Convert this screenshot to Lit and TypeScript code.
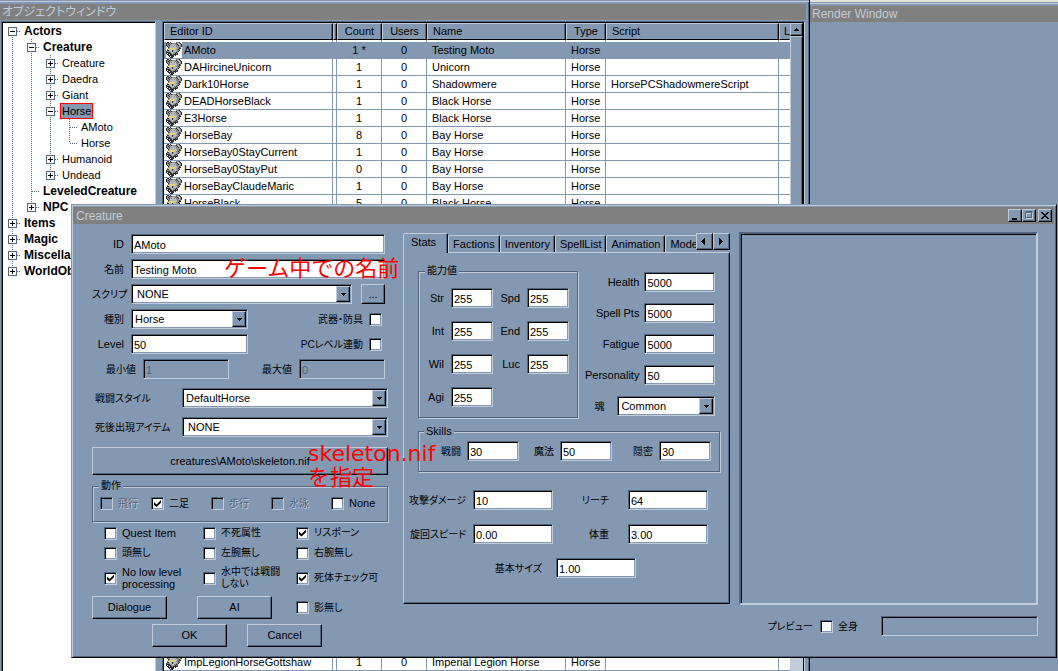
import { LitElement, html, svg, css, nothing } from "lit";
import { customElement, property } from "lit/decorators.js";
import { classMap } from "lit/directives/class-map.js";

type TreeRow = { guides: string; label: string; bold?: boolean; selected?: boolean };
type ListRow = { id: string; count: string; name: string; script?: string };

/* Guide codes: v line, t tee, l corner, + closed node, - open node,
   P last closed node of a branch, F first open node of the tree. */
const TREE: TreeRow[] = [
  { guides: "F", label: "Actors", bold: true },
  { guides: "v-", label: "Creature", bold: true },
  { guides: "vv+", label: "Creature" },
  { guides: "vv+", label: "Daedra" },
  { guides: "vv+", label: "Giant" },
  { guides: "vv-", label: "Horse", selected: true },
  { guides: "vvvt", label: "AMoto" },
  { guides: "vvvl", label: "Horse" },
  { guides: "vv+", label: "Humanoid" },
  { guides: "vvP", label: "Undead" },
  { guides: "vt", label: "LeveledCreature", bold: true },
  { guides: "vP", label: "NPC", bold: true },
  { guides: "+", label: "Items", bold: true },
  { guides: "+", label: "Magic", bold: true },
  { guides: "+", label: "Miscellaneous", bold: true },
  { guides: "P", label: "WorldObjects", bold: true },
];

const ROWS: ListRow[] = [
  { id: "AMoto", count: "1 *", name: "Testing Moto" },
  { id: "DAHircineUnicorn", count: "1", name: "Unicorn" },
  { id: "Dark10Horse", count: "1", name: "Shadowmere", script: "HorsePCShadowmereScript" },
  { id: "DEADHorseBlack", count: "1", name: "Black Horse" },
  { id: "E3Horse", count: "1", name: "Black Horse" },
  { id: "HorseBay", count: "8", name: "Bay Horse" },
  { id: "HorseBay0StayCurrent", count: "1", name: "Bay Horse" },
  { id: "HorseBay0StayPut", count: "0", name: "Bay Horse" },
  { id: "HorseBayClaudeMaric", count: "1", name: "Bay Horse" },
  { id: "HorseBlack", count: "5", name: "Black Horse" },
];
const LAST_ROW: ListRow = { id: "ImpLegionHorseGottshaw", count: "1", name: "Imperial Legion Horse" };

/* 16x16 creature head, one character per pixel. */
const CREATURE = [
  ".kk.k.....gggk..",
  "kggkgkggggkllgk.",
  "kgkggllllggkllgk",
  "kggklgllglggklgk",
  ".kggllllllggglgk",
  "..kglllllllggkg.",
  "..glyylyyllggkk.",
  ".gyylyyyllggkg..",
  ".kklllkglllggk..",
  "kgggllklllggk...",
  "kkkkglllggkg....",
  "kwkkkglggkgk....",
  ".kkwkkgkkkkr....",
  "..kkkkkkwk......",
  "...kwkkk........",
  "....kkk.........",
];
const PIXEL: Record<string, string> = { k: "#2c2e30", g: "#88898b", l: "#b9babc", y: "#f2e24a", w: "#e8e8e8", r: "#7a4a4a" };

@customElement("creature-icon")
export class CreatureIcon extends LitElement {
  static styles = css`
    :host { display: block; flex: none; width: 16px; height: 16px; background: #fff; }
    svg { display: block; }
  `;
  render() {
    return html`<svg width="16" height="16" viewBox="0 0 16 16" shape-rendering="crispEdges" aria-hidden="true">
      ${CREATURE.map((line, y) =>
        [...line].map((c, x) => (PIXEL[c] ? svg`<rect x=${x} y=${y} width="1" height="1" fill=${PIXEL[c]}></rect>` : nothing)),
      )}
    </svg>`;
  }
}

@customElement("tree-guide")
export class TreeGuide extends LitElement {
  static styles = css`
    :host { display: block; width: 19px; height: 16px; }
    svg { display: block; }
  `;
  @property() kind = " ";
  render() {
    const k = this.kind;
    const top = "vt-+lP".includes(k);
    const bottom = "vt-+F".includes(k);
    const box = "+-PF".includes(k);
    const dots = (d: string) => svg`<path d=${d} stroke="#51657d" stroke-dasharray="1 1" fill="none"></path>`;
    return html`<svg width="19" height="16" viewBox="0 0 19 16" shape-rendering="crispEdges" aria-hidden="true">
      ${top ? dots("M9.5 0V8") : nothing}
      ${bottom ? dots("M9.5 8V16") : nothing}
      ${k === "v" ? nothing : dots("M10 8.5H18")}
      ${box
        ? svg`<rect x="5.5" y="4.5" width="8" height="8" fill="#fff" stroke="#51657d"></rect>
            <path d="M7 8.5H12" stroke="#000"></path>
            ${"+P".includes(k) ? svg`<path d="M9.5 6V11" stroke="#000"></path>` : nothing}`
        : nothing}
    </svg>`;
  }
}

@customElement("app-root")
export class AppRoot extends LitElement {
  static styles = css`
    :host {
      --face: #8399b1;
      --light: #c0ccd9;
      --dark: #51657d;
      display: block;
      position: relative;
      height: 100vh;
      overflow: hidden;
      background: #e4e2dc;
      color: #000;
      font: 11px/13px "Liberation Sans", "Noto Sans CJK JP", sans-serif;
      font-feature-settings: "palt";
    }
    * { box-sizing: border-box; }
    button, input, select { font: inherit; color: inherit; margin: 0; border-radius: 0; }
    .jp { font-size: 10px; }

    /* windows */
    .window { position: absolute; display: flex; flex-direction: column; background: var(--face); }
    .objects { left: 0; top: 0; bottom: 0; width: 810px; padding: 4px 3px 0 0; border-right: 1px solid #000; box-shadow: inset 0 1px 0 var(--face), inset 0 2px 0 var(--light), inset -1px 0 0 var(--dark); }
    .render { left: 810px; right: 0; top: 2px; bottom: 0; padding-top: 4px; box-shadow: inset 0 1px 0 var(--face), inset 0 2px 0 var(--light); }
    .dialog {
      left: 71px; right: 1px; top: 204px; padding: 1px;
      border: 1px solid; border-color: var(--face) #000 #000 var(--face);
      box-shadow: inset 1px 1px 0 var(--light), inset -1px -1px 0 var(--dark);
    }
    .title { display: flex; align-items: center; height: 16px; padding: 0 2px; background: #808080; color: var(--light); font-size: 12px; line-height: 16px; font-weight: 400; margin: 0; }
    .dialog .title { height: 17px; margin: 1px 1px 0 0; padding-left: 3px; }
    .title-text { flex: 1; }
    .caption { width: 14px; height: 13px; }
    .close { margin-left: 2px; }

    /* relief */
    .raised, .btn { background: var(--face); border: 1px solid; border-color: var(--light) #000 #000 var(--light); box-shadow: inset -1px -1px 0 var(--dark); padding: 0; display: flex; align-items: center; justify-content: center; }
    .sunken, .field, .check { border: 1px solid; border-color: var(--dark) var(--light) var(--light) var(--dark); box-shadow: inset 1px 1px 0 #000, inset -1px -1px 0 var(--face); }

    /* object window */
    .panes { flex: 1; min-height: 0; display: flex; gap: 6px; padding: 1px 1px 0 1px; }
    .pane { border: 1px solid; border-color: var(--dark) var(--light) var(--light) var(--dark); border-bottom: 0; }
    .tree { width: 155px; margin: 0; padding: 1px 0 0 1px; background: #fff; box-shadow: inset 1px 1px 0 #000; list-style: none; overflow: hidden; }
    .node { display: flex; height: 16px; line-height: 16px; white-space: nowrap; }
    .node-label { padding: 0 2px; }
    .bold { font-weight: 700; font-size: 12px; }
    .node .selected { background: var(--face); outline: 1px solid #f00; outline-offset: -1px; }
    .list { flex: 1; min-width: 0; display: flex; background: #fff; padding: 1px 1px 0 1px; box-shadow: inset 1px 1px 0 #000, inset -1px 0 0 #000; overflow: hidden; }
    .grid { flex: 1; min-width: 0; overflow: hidden; }
    table { width: 100%; table-layout: fixed; border-collapse: separate; border-spacing: 0; }
    .c-id { width: 169px; } .c-gap { width: 4px; } .c-num { width: 45px; } .c-name { width: 139px; } .c-type { width: 40px; } .c-script { width: 173px; }
    th { height: 17px; padding: 0 5px; font-weight: 400; text-align: left; background: var(--face); border: 1px solid; border-color: var(--light) #000 #000 var(--light); box-shadow: inset -1px 0 0 var(--dark); white-space: nowrap; line-height: 15px; }
    th.num { text-align: center; padding: 0; }
    th.last { padding: 0 0 0 4px; border-right-color: var(--face); box-shadow: none; }
    .space td { height: 2px; border-bottom: 0; }
    td { height: 17px; padding: 1px 5px 0 5px; border: 1px solid var(--face); border-width: 0 1px 1px 0; line-height: 15px; white-space: nowrap; }
    .space td { padding: 0; line-height: 1px; }
    td:last-child { border-right: 0; }
    td.id { padding: 1px 0 0 2px; }
    td.num { text-align: center; padding: 1px 0 0; }
    tr.current td { background: var(--face); }
    .with-icon { display: flex; align-items: flex-end; height: 15px; gap: 2px; }
    .offscreen td { height: 442px; }
    .scroll { width: 13px; display: flex; flex-direction: column; background: var(--light); }
    .scroll .raised { width: 13px; height: 13px; }
    .thumb { flex: none; height: 520px; background: var(--face); border: 1px solid; border-color: var(--light) #000 #000 var(--light); box-shadow: inset -1px -1px 0 var(--dark); }

    /* dialog */
    .body { display: flex; align-items: stretch; padding: 0 17px 9px 19px; }
    .left { width: 296px; margin-top: 10px; display: flex; flex-direction: column; }
    .middle { width: 327px; margin: 9px 0 0 15px; }
    .right { flex: 1; min-width: 0; margin: 8px 0 11px 9px; display: flex; flex-direction: column; }

    .field { height: 20px; min-width: 0; width: 100%; padding: 1px 3px 0 2px; background: #fff; outline: 0; display: block; }
    .field:disabled { background: var(--face); color: var(--dark); opacity: 1; }
    .combo { display: grid; grid-template-columns: 1fr 16px; min-width: 0; text-align: left; }
    .combo select { grid-area: 1 / 1 / 2 / 3; appearance: none; padding: 0 18px 0 3px; }
    .combo .raised { grid-area: 1 / 2; width: 14px; height: 16px; margin: 2px 0; pointer-events: none; z-index: 1; }
    .indent select { padding-left: 5px; }
    .btn { height: 23px; width: 75px; }
    .btn.more { width: 24px; height: 20px; }
    .btn.wide { width: 100%; height: 28px; margin-top: 10px; }

    .rows { display: grid; gap: 5px; padding-right: 3px; }
    .row { display: grid; grid-template-columns: 32px 1fr; column-gap: 7px; align-items: center; white-space: nowrap; }
    .row > label:first-child { text-align: right; }
    .row.more-row { grid-template-columns: 32px 221px 1fr; }
    .row.more-row .more { justify-self: end; }
    .row.check-row { grid-template-columns: 32px 117px 1fr; }
    .row.range { grid-template-columns: 44px 86px 56px 1fr; }
    .row.range label { text-align: right; }
    .tail { display: flex; align-items: center; justify-content: flex-end; gap: 6px; padding-right: 3px; }
    .wide-rows { display: grid; gap: 9px; margin-top: 9px; }
    .wide-row { display: grid; grid-template-columns: 87px 1fr; padding-left: 3px; align-items: center; white-space: nowrap; }

    .check { appearance: none; flex: none; width: 13px; height: 13px; background: #fff; display: grid; place-items: center; }
    .check:checked::before { content: ""; width: 7px; height: 7px; background: #000; clip-path: polygon(0 29%, 36% 64%, 100% 0, 100% 40%, 36% 100%, 0 70%); }
    .check:disabled { background: var(--face); }
    .tick { display: flex; align-items: center; gap: 5px; white-space: nowrap; }
    .tick.off { color: var(--dark); text-shadow: 1px 1px 0 var(--light); }

    fieldset { min-width: 0; margin: 0; border: 1px solid var(--dark); box-shadow: 1px 1px 0 var(--light), inset 1px 1px 0 var(--light); }
    legend { padding: 0 2px; margin-left: 5px; height: 12px; line-height: 12px; background: var(--face); }
    .motion { display: grid; grid-template-columns: 51px 60px 60px 60px 1fr; padding: 5px 0 11px 7px; margin-top: 5px; }
    .motion legend { margin-left: -1px; }
    .flags { display: grid; grid-template-columns: 99px 93px 1fr; grid-template-rows: 14px 14px 24px; row-gap: 6px; padding-left: 12px; margin-top: 4px; line-height: 12px; }
    .actions { display: flex; align-items: center; margin-top: 6px; }
    .actions .btn + .btn { margin-left: 30px; }
    .actions .tick { margin-left: 24px; }
    .confirm { display: flex; gap: 20px; padding-left: 60px; margin-top: 5px; }

    /* tabs */
    .strip { display: flex; height: 20px; margin-bottom: -1px; position: relative; }
    .tabs { flex: 1; min-width: 0; display: flex; align-items: flex-start; overflow: hidden; }
    .tab { flex: none; margin-top: 2px; height: 17px; padding: 0 4px; background: var(--face); border: 1px solid; border-color: var(--light) #000 transparent var(--light); border-bottom: 0; border-radius: 2px 2px 0 0; box-shadow: inset -1px 0 0 var(--dark); white-space: nowrap; }
    .tab.active { margin-top: 0; height: 20px; padding: 0 11px 2px 7px; }
    .strip .raised { width: 17px; height: 17px; }
    .panel { border: 1px solid; border-color: var(--light) #000 #000 var(--light); box-shadow: inset -1px -1px 0 var(--dark); padding: 12px 9px 25px 12px; }
    .top { display: flex; justify-content: space-between; padding: 0 5px 0 2px; }
    .abilities { width: 160px; display: grid; grid-template-columns: 24px 42px 20px 42px; column-gap: 7px; row-gap: 13px; align-items: center; padding: 11px 0 10px 1px; }
    .abilities label { text-align: right; }
    .vitals { margin-top: 7px; width: 130px; display: grid; row-gap: 11px; align-content: start; }
    .vital { display: grid; grid-template-columns: 1fr 71px; column-gap: 5px; align-items: center; white-space: nowrap; text-align: right; }
    .vital.soul { grid-template-columns: 1fr 98px; column-gap: 13px; }
    .skills { margin: 7px 0 0 2px; display: grid; grid-template-columns: 100px 93px 99px; padding: 4px 0 10px 0; }
    .abilities legend, .skills legend { margin-left: 5px; }
    .skill { display: grid; grid-template-columns: 1fr 52px; column-gap: 6px; align-items: center; text-align: right; }
    .misc { display: grid; grid-template-columns: 50px 80px 61px 80px; column-gap: 7px; row-gap: 14px; margin-top: 18px; align-items: center; white-space: nowrap; }
    .misc label { display: flex; justify-content: flex-end; }
    .misc .far { padding-right: 12px; }
    .size { display: grid; grid-template-columns: 126px 80px; column-gap: 14px; margin-top: 14px; align-items: center; }
    .size label { text-align: right; }

    /* preview */
    .preview { flex: 1; border-width: 2px; border-color: var(--dark) var(--light) var(--light) var(--dark); box-shadow: inset 1px 1px 0 #000; }
    .below { display: grid; grid-template-columns: 74px 54px 1fr; column-gap: 7px; margin-top: 11px; align-items: center; }
    .below > label:first-child { text-align: right; }
    .status { height: 20px; }

    /* notes */
    .note { position: absolute; margin: 0; color: #f00; font: 22px/24px "DejaVu Sans", "Noto Sans CJK JP", sans-serif; font-feature-settings: normal; white-space: nowrap; pointer-events: none; }
    .note-name { left: 224px; top: 257px; }
    .note-model { left: 308px; top: 442px; }
  `;

  private arrow(dir: "up" | "down" | "left" | "right") {
    const d = { up: "M3 0h1v1h1v1h1v1H1V2h1V1h1z", down: "M1 1h5v1H5v1H4v1H3V3H2V2H1z", left: "M4 0v7H3V6H2V5H1V4H0V3h1V2h1V1h1V0z", right: "M1 0v7h1V6h1V5h1V4h1V3H4V2H3V1H2V0z" }[dir];
    const h = dir === "up" || dir === "down" ? 4 : 7;
    return html`<svg width="7" height=${h} viewBox="0 0 7 ${h}" shape-rendering="crispEdges" aria-hidden="true"><path d=${d}></path></svg>`;
  }

  private text(id: string, label: string, value: string, opts: { jp?: boolean; cls?: string; disabled?: boolean } = {}) {
    return html`<label for=${id} class=${classMap({ jp: !!opts.jp, [opts.cls || "lbl"]: true })}>${label}</label
      ><input class="field" id=${id} type="text" .value=${value} ?disabled=${!!opts.disabled} />`;
  }

  private combo(id: string, value: string, indent = false) {
    return html`<span class=${classMap({ combo: true, indent })}>
      <select class="field" id=${id}><option>${value}</option></select>
      <span class="raised">${this.arrow("down")}</span>
    </span>`;
  }

  private tick(label: unknown, opts: { on?: boolean; off?: boolean; jp?: boolean } = {}) {
    return html`<label class=${classMap({ tick: true, off: !!opts.off, jp: opts.jp !== false })}
      ><input class="check" type="checkbox" .checked=${!!opts.on} ?disabled=${!!opts.off} /><span>${label}</span></label>`;
  }

  private listRow(r: ListRow, current = false) {
    return html`<tr class=${classMap({ current })}>
      <td class="id"><div class="with-icon"><creature-icon></creature-icon>${r.id}</div></td>
      <td></td>
      <td class="num">${r.count}</td>
      <td class="num">0</td>
      <td>${r.name}</td>
      <td>Horse</td>
      <td>${r.script ?? ""}</td>
      <td></td>
    </tr>`;
  }

  private objectWindow() {
    return html`<section class="window objects">
      <h2 class="title">オブジェクトウィンドウ</h2>
      <div class="panes">
        <ul class="pane tree">
          ${TREE.map(
            (n) => html`<li class="node">
              ${[...n.guides].map((g) => html`<tree-guide .kind=${g}></tree-guide>`)}
              <span class=${classMap({ "node-label": true, bold: !!n.bold, selected: !!n.selected })}>${n.label}</span>
            </li>`,
          )}
        </ul>
        <div class="pane list">
          <div class="grid">
            <table>
              <colgroup>
                <col class="c-id" /><col class="c-gap" /><col class="c-num" /><col class="c-num" />
                <col class="c-name" /><col class="c-type" /><col class="c-script" /><col />
              </colgroup>
              <thead>
                <tr>
                  <th>Editor ID</th><th></th><th class="num">Count</th><th class="num">Users</th>
                  <th>Name</th><th class="num">Type</th><th>Script</th><th class="last">L</th>
                </tr>
              </thead>
              <tbody>
                <tr class="space"><td></td><td></td><td></td><td></td><td></td><td></td><td></td><td></td></tr>
                ${ROWS.map((r, i) => this.listRow(r, i === 0))}
                <tr class="offscreen"><td colspan="8"></td></tr>
                ${this.listRow(LAST_ROW)}
              </tbody>
            </table>
          </div>
          <div class="scroll">
            <button class="raised" aria-label="Scroll up">${this.arrow("up")}</button>
            <div class="thumb"></div>
          </div>
        </div>
      </div>
    </section>`;
  }

  private leftColumn() {
    return html`<div class="left">
      <div class="rows">
        <div class="row">${this.text("id", "ID", "AMoto")}</div>
        <div class="row">${this.text("name", "名前", "Testing Moto", { jp: true })}</div>
        <div class="row more-row">
          <label for="script" class="jp">スクリプ</label>${this.combo("script", "NONE", true)}
          <button class="btn more">...</button>
        </div>
        <div class="row check-row">
          <label for="kind" class="jp">種別</label>${this.combo("kind", "Horse")}
          <div class="tail"><label for="armed" class="jp">武器・防具</label><input class="check" id="armed" type="checkbox" /></div>
        </div>
        <div class="row check-row">
          ${this.text("level", "Level", "50")}
          <div class="tail"><label for="pclevel" class="jp">PCレベル連動</label><input class="check" id="pclevel" type="checkbox" /></div>
        </div>
        <div class="row range">
          ${this.text("min", "最小値", "1", { jp: true, disabled: true })}
          ${this.text("max", "最大値", "0", { jp: true, disabled: true })}
        </div>
      </div>
      <div class="wide-rows">
        <div class="wide-row"><label for="style" class="jp">戦闘スタイル</label>${this.combo("style", "DefaultHorse")}</div>
        <div class="wide-row"><label for="death" class="jp">死後出現アイテム</label>${this.combo("death", "NONE", true)}</div>
      </div>
      <button class="btn wide">creatures\\AMoto\\skeleton.nif</button>
      <fieldset class="motion">
        <legend class="jp">動作</legend>
        ${this.tick("飛行", { off: true })} ${this.tick("二足", { on: true })} ${this.tick("歩行", { off: true })}
        ${this.tick("水泳", { off: true })} ${this.tick("None", { jp: false })}
      </fieldset>
      <div class="flags">
        ${this.tick("Quest Item", { jp: false })} ${this.tick("不死属性")} ${this.tick("リスポーン", { on: true })}
        ${this.tick("頭無し")} ${this.tick("左腕無し")} ${this.tick("右腕無し")}
        ${this.tick(html`No low level<br />processing`, { on: true, jp: false })}
        ${this.tick(html`水中では戦闘<br />しない`)} ${this.tick("死体チェック可", { on: true })}
      </div>
      <div class="actions">
        <button class="btn">Dialogue</button><button class="btn">AI</button>${this.tick("影無し")}
      </div>
      <div class="confirm"><button class="btn">OK</button><button class="btn">Cancel</button></div>
    </div>`;
  }

  private tabColumn() {
    return html`<div class="middle">
      <div class="strip">
        <div class="tabs" role="tablist">
          ${["Stats", "Factions", "Inventory", "SpellList", "Animation", "Model"].map(
            (t, i) => html`<button role="tab" aria-selected=${i === 0} class=${classMap({ tab: true, active: i === 0 })}>${t}</button>`,
          )}
        </div>
        <button class="raised" aria-label="Previous tab">${this.arrow("left")}</button>
        <button class="raised" aria-label="Next tab">${this.arrow("right")}</button>
      </div>
      <div class="panel" role="tabpanel">
        <div class="top">
          <fieldset class="abilities">
            <legend class="jp">能力値</legend>
            ${this.text("str", "Str", "255")} ${this.text("spd", "Spd", "255")}
            ${this.text("int", "Int", "255")} ${this.text("end", "End", "255")}
            ${this.text("wil", "Wil", "255")} ${this.text("luc", "Luc", "255")}
            ${this.text("agi", "Agi", "255")}
          </fieldset>
          <div class="vitals">
            <div class="vital">${this.text("health", "Health", "5000")}</div>
            <div class="vital">${this.text("spell", "Spell Pts", "5000")}</div>
            <div class="vital">${this.text("fatigue", "Fatigue", "5000")}</div>
            <div class="vital">${this.text("personality", "Personality", "50")}</div>
            <div class="vital soul"><label for="soul" class="jp">魂</label>${this.combo("soul", "Common")}</div>
          </div>
        </div>
        <fieldset class="skills">
          <legend>Skills</legend>
          <div class="skill">${this.text("combat", "戦闘", "30", { jp: true })}</div>
          <div class="skill">${this.text("magic", "魔法", "50", { jp: true })}</div>
          <div class="skill">${this.text("stealth", "隠密", "30", { jp: true })}</div>
        </fieldset>
        <div class="misc">
          ${this.text("damage", "攻撃ダメージ", "10", { jp: true })} ${this.text("reach", "リーチ", "64", { jp: true, cls: "far" })}
          ${this.text("turn", "旋回スピード", "0.00", { jp: true })} ${this.text("weight", "体重", "3.00", { jp: true, cls: "far" })}
        </div>
        <div class="size">${this.text("scale", "基本サイズ", "1.00", { jp: true })}</div>
      </div>
    </div>`;
  }

  private dialog() {
    return html`<section class="window dialog" role="dialog" aria-label="Creature">
      <h2 class="title">
        <span class="title-text">Creature</span>
        <button class="raised caption" aria-label="Minimize"><svg width="8" height="8" viewBox="0 0 8 8" shape-rendering="crispEdges"><path d="M1 6h5v2H1z"></path></svg></button>
        <button class="raised caption" aria-label="Maximize"><svg width="9" height="9" viewBox="0 0 9 9" shape-rendering="crispEdges"><path d="M1.5 2.5h6v5h-6z" fill="none" stroke="#c0ccd9"></path><path d="M.5 1.5h6v5h-6zM.5 .5h6" fill="none" stroke="#51657d"></path></svg></button>
        <button class="raised caption close" aria-label="Close"><svg width="8" height="7" viewBox="0 0 8 7" shape-rendering="crispEdges"><path d="M0 0h2v1h1v1h2V1h1V0h2v1H7v1H6v1H5v1h1v1h1v1h1v1H6V6H5V5H3v1H2v1H0V6h1V5h1V4h1V3H2V2H1V1H0z"></path></svg></button>
      </h2>
      <div class="body">
        ${this.leftColumn()} ${this.tabColumn()}
        <div class="right">
          <div class="sunken preview"></div>
          <div class="below">
            <label for="whole" class="jp">プレビュー</label>
            <div class="tick"><input class="check" id="whole" type="checkbox" /><label for="whole" class="jp">全身</label></div>
            <div class="sunken status"></div>
          </div>
        </div>
      </div>
    </section>`;
  }

  render() {
    return html`
      ${this.objectWindow()}
      <section class="window render"><h2 class="title">Render Window</h2></section>
      ${this.dialog()}
      <p class="note note-name">ゲーム中での名前</p>
      <p class="note note-model">skeleton.nif<br />を指定</p>
    `;
  }
}
